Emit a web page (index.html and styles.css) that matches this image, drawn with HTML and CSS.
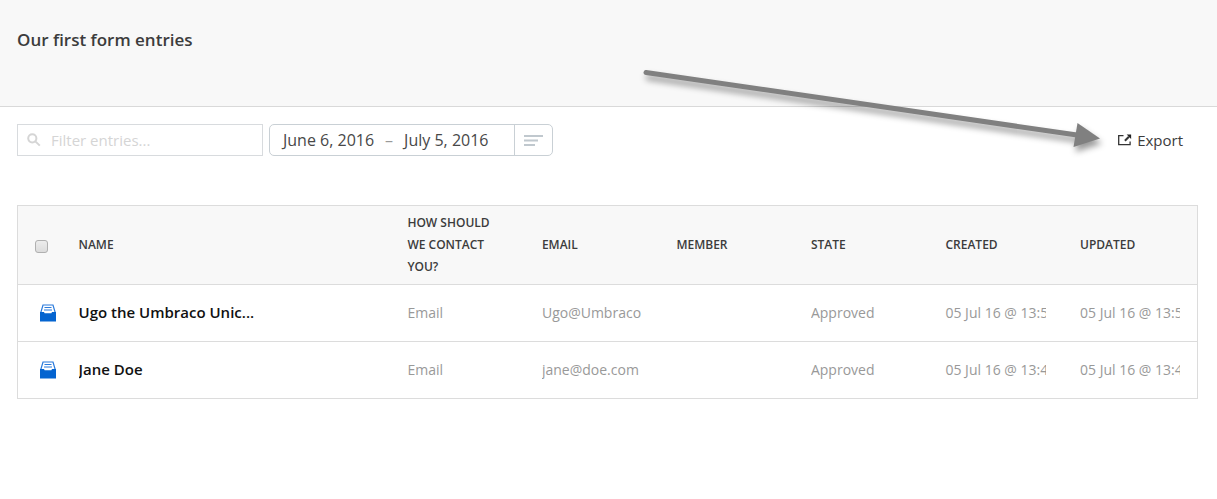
FILE: index.html
```html
<!DOCTYPE html>
<html lang="en">
<head>
<meta charset="utf-8">
<title>Our first form entries</title>
<link rel="stylesheet" href="styles.css">
</head>
<body>
<header class="page-header">
  <h1 class="page-title">Our first form entries</h1>
</header>
<main class="content">
  <div class="toolbar">
    <label class="filter">
      <svg class="filter-icon" viewBox="0 0 14 14" aria-hidden="true"><circle cx="5.3" cy="5.3" r="4.1"/><path d="M8.6 8.6L12.8 12.6"/></svg>
      <input class="filter-input" type="text" placeholder="Filter entries..." aria-label="Filter entries">
    </label>
    <div class="daterange">
      <button class="dates" type="button"><span>June 6, 2016</span><span class="dash">–</span><span>July 5, 2016</span></button>
      <button class="presets" type="button" aria-label="Date presets">
        <svg class="presets-icon" viewBox="0 0 19 11" aria-hidden="true"><path d="M0 1h19M0 5.5h14M0 10h11"/></svg>
      </button>
    </div>
    <button class="export" type="button">
      <svg class="export-icon" viewBox="0 0 14 12" aria-hidden="true"><path class="frame" d="M6 1.6H1.2V10.6H12.6V7.6"/><path class="stem" d="M7.4 6.8L11.4 2.8"/><path class="tip" d="M9.2 .6H13.6V5z"/></svg>
      <span>Export</span>
    </button>
  </div>
  <table class="entries">
    <colgroup>
      <col class="col-check"><col class="col-name"><col class="col-field"><col class="col-field"><col class="col-field"><col class="col-field"><col class="col-field"><col class="col-field">
    </colgroup>
    <thead>
      <tr>
        <th class="check"><input class="checkbox" type="checkbox" aria-label="Select all entries"></th>
        <th>Name</th><th>How should we contact you?</th><th>Email</th><th>Member</th><th>State</th><th>Created</th><th>Updated</th>
      </tr>
    </thead>
    <tbody>
      <tr>
        <td class="icon"><svg class="tray" viewBox="0 0 16 18" aria-hidden="true"><path class="tray-side" d="M.8 8.500L3 1H13L15.200 8.500"/><path class="tray-lines" d="M4.500 3.500h7M4 6h8"/><path class="tray-box" d="M0 8H4L4.600 9.200H11.400L12 8H16V17.500H0z"/></svg></td>
        <td class="name"><div class="clip">Ugo the Umbraco Unic...</div></td>
        <td><div class="clip">Email</div></td>
        <td><div class="clip">Ugo@Umbraco</div></td>
        <td></td>
        <td><div class="clip">Approved</div></td>
        <td><div class="clip">05 Jul 16 @ 13:5</div></td>
        <td><div class="clip">05 Jul 16 @ 13:5</div></td>
      </tr>
      <tr>
        <td class="icon"><svg class="tray" viewBox="0 0 16 18" aria-hidden="true"><path class="tray-side" d="M.8 8.500L3 1H13L15.200 8.500"/><path class="tray-lines" d="M4.500 3.500h7M4 6h8"/><path class="tray-box" d="M0 8H4L4.600 9.200H11.400L12 8H16V17.500H0z"/></svg></td>
        <td class="name"><div class="clip">Jane Doe</div></td>
        <td><div class="clip">Email</div></td>
        <td><div class="clip">jane@doe.com</div></td>
        <td></td>
        <td><div class="clip">Approved</div></td>
        <td><div class="clip">05 Jul 16 @ 13:4</div></td>
        <td><div class="clip">05 Jul 16 @ 13:4</div></td>
      </tr>
    </tbody>
  </table>
</main>
<svg class="pointer" viewBox="0 0 470 100" aria-hidden="true"><path class="pointer-line" d="M17 12.500L448 75"/><path class="pointer-head" d="M448.500 63L471 78.500L444.500 87z"/></svg>
</body>
</html>
```
FILE: styles.css
```css
* { box-sizing: border-box; }

body {
  position: relative;
  margin: 0;
  background: #fff;
  color: #3c3c3c;
  font-family: "Open Sans", "Noto Sans", sans-serif;
  font-size: 14px;
  line-height: 22px;
}

button { margin: 0; border: 0; background: none; color: inherit; font: inherit; }

.page-header {
  padding: 28px 17px 54px;
  background: #f8f8f8;
  border-bottom: 1px solid #d9d9d9;
}
.page-title { margin: 0; font-size: 17px; line-height: 24px; font-weight: 600; }

.content { padding: 17px 19px 0 17px; }

.toolbar { display: flex; align-items: center; margin-bottom: 49px; font-size: 16px; }

.filter {
  display: flex;
  align-items: center;
  gap: 10px;
  width: 246px;
  height: 32px;
  padding: 0 9px;
  border: 1px solid #d8dbde;
}
.filter-icon { flex: none; width: 14px; height: 14px; fill: none; stroke: #d5d5d5; stroke-width: 2; }
.filter-input {
  flex: 1;
  min-width: 0;
  padding: 0;
  border: 0;
  outline: 0;
  background: none;
  color: inherit;
  font: inherit;
  font-size: 15px;
}
.filter-input::placeholder { color: #d5d5d5; opacity: 1; }

.daterange {
  display: flex;
  height: 32px;
  margin-left: 6px;
  border: 1px solid #c9d0d5;
  border-radius: 5px;
}
.dates { display: flex; align-items: center; gap: 11px; width: 244px; padding: 0 13px; color: #484848; }
.dash { color: #999; }
.presets {
  display: flex;
  align-items: center;
  justify-content: center;
  width: 38px;
  padding: 0;
  border-left: 1px solid #c9d0d5;
}
.presets-icon { width: 19px; height: 11px; fill: none; stroke: #c0c8ce; stroke-width: 2; }

.export {
  display: flex;
  align-items: center;
  gap: 5px;
  margin-left: auto;
  padding: 0 15px 0 0;
  font-size: 15px;
}
.export-icon { width: 15px; height: 12px; fill: none; stroke: #343434; }
.frame { stroke-width: 1.300; }
.stem { stroke-width: 2; }
.tip { fill: #222; stroke: none; }

.entries {
  width: 100%;
  table-layout: fixed;
  border-collapse: collapse;
  border: 1px solid #dcdcdc;
}
.col-check { width: 44px; }
.col-field { width: 11.400%; }

th, td { padding: 17px; text-align: left; vertical-align: middle; }
th {
  height: 79px;
  padding: 6px 17px;
  background: #f8f8f8;
  font-size: 12px;
  font-weight: 600;
  text-transform: uppercase;
}
td { height: 57px; border-top: 1px solid #dcdcdc; color: #999; }
.check { padding: 3px 0 0 17px; line-height: 0; }
.icon { padding: 0 0 0 22px; line-height: 0; }
.name { padding-top: 15px; color: #111; font-size: 15px; font-weight: 600; }
.clip { overflow: hidden; white-space: nowrap; }

.checkbox {
  appearance: none;
  width: 13px;
  height: 13px;
  margin: 0;
  border: 1px solid #b0b0b0;
  border-radius: 3px;
  background: linear-gradient(#ececec, #dcdcdc);
}

.tray { width: 16px; height: 18px; fill: none; stroke: #2a7bdc; }
.tray-side { stroke-width: 1.200; }
.tray-lines { stroke-width: 1.200; }
.tray-box { fill: #0464d0; stroke: none; }

.pointer {
  position: absolute;
  top: 60px;
  left: 629px;
  width: 470px;
  height: 100px;
  overflow: visible;
  pointer-events: none;
  filter: drop-shadow(2px 5px 3px rgba(0, 0, 0, .4));
}
.pointer-line { fill: none; stroke: #808080; stroke-width: 5; stroke-linecap: round; }
.pointer-head { fill: #808080; }
```
